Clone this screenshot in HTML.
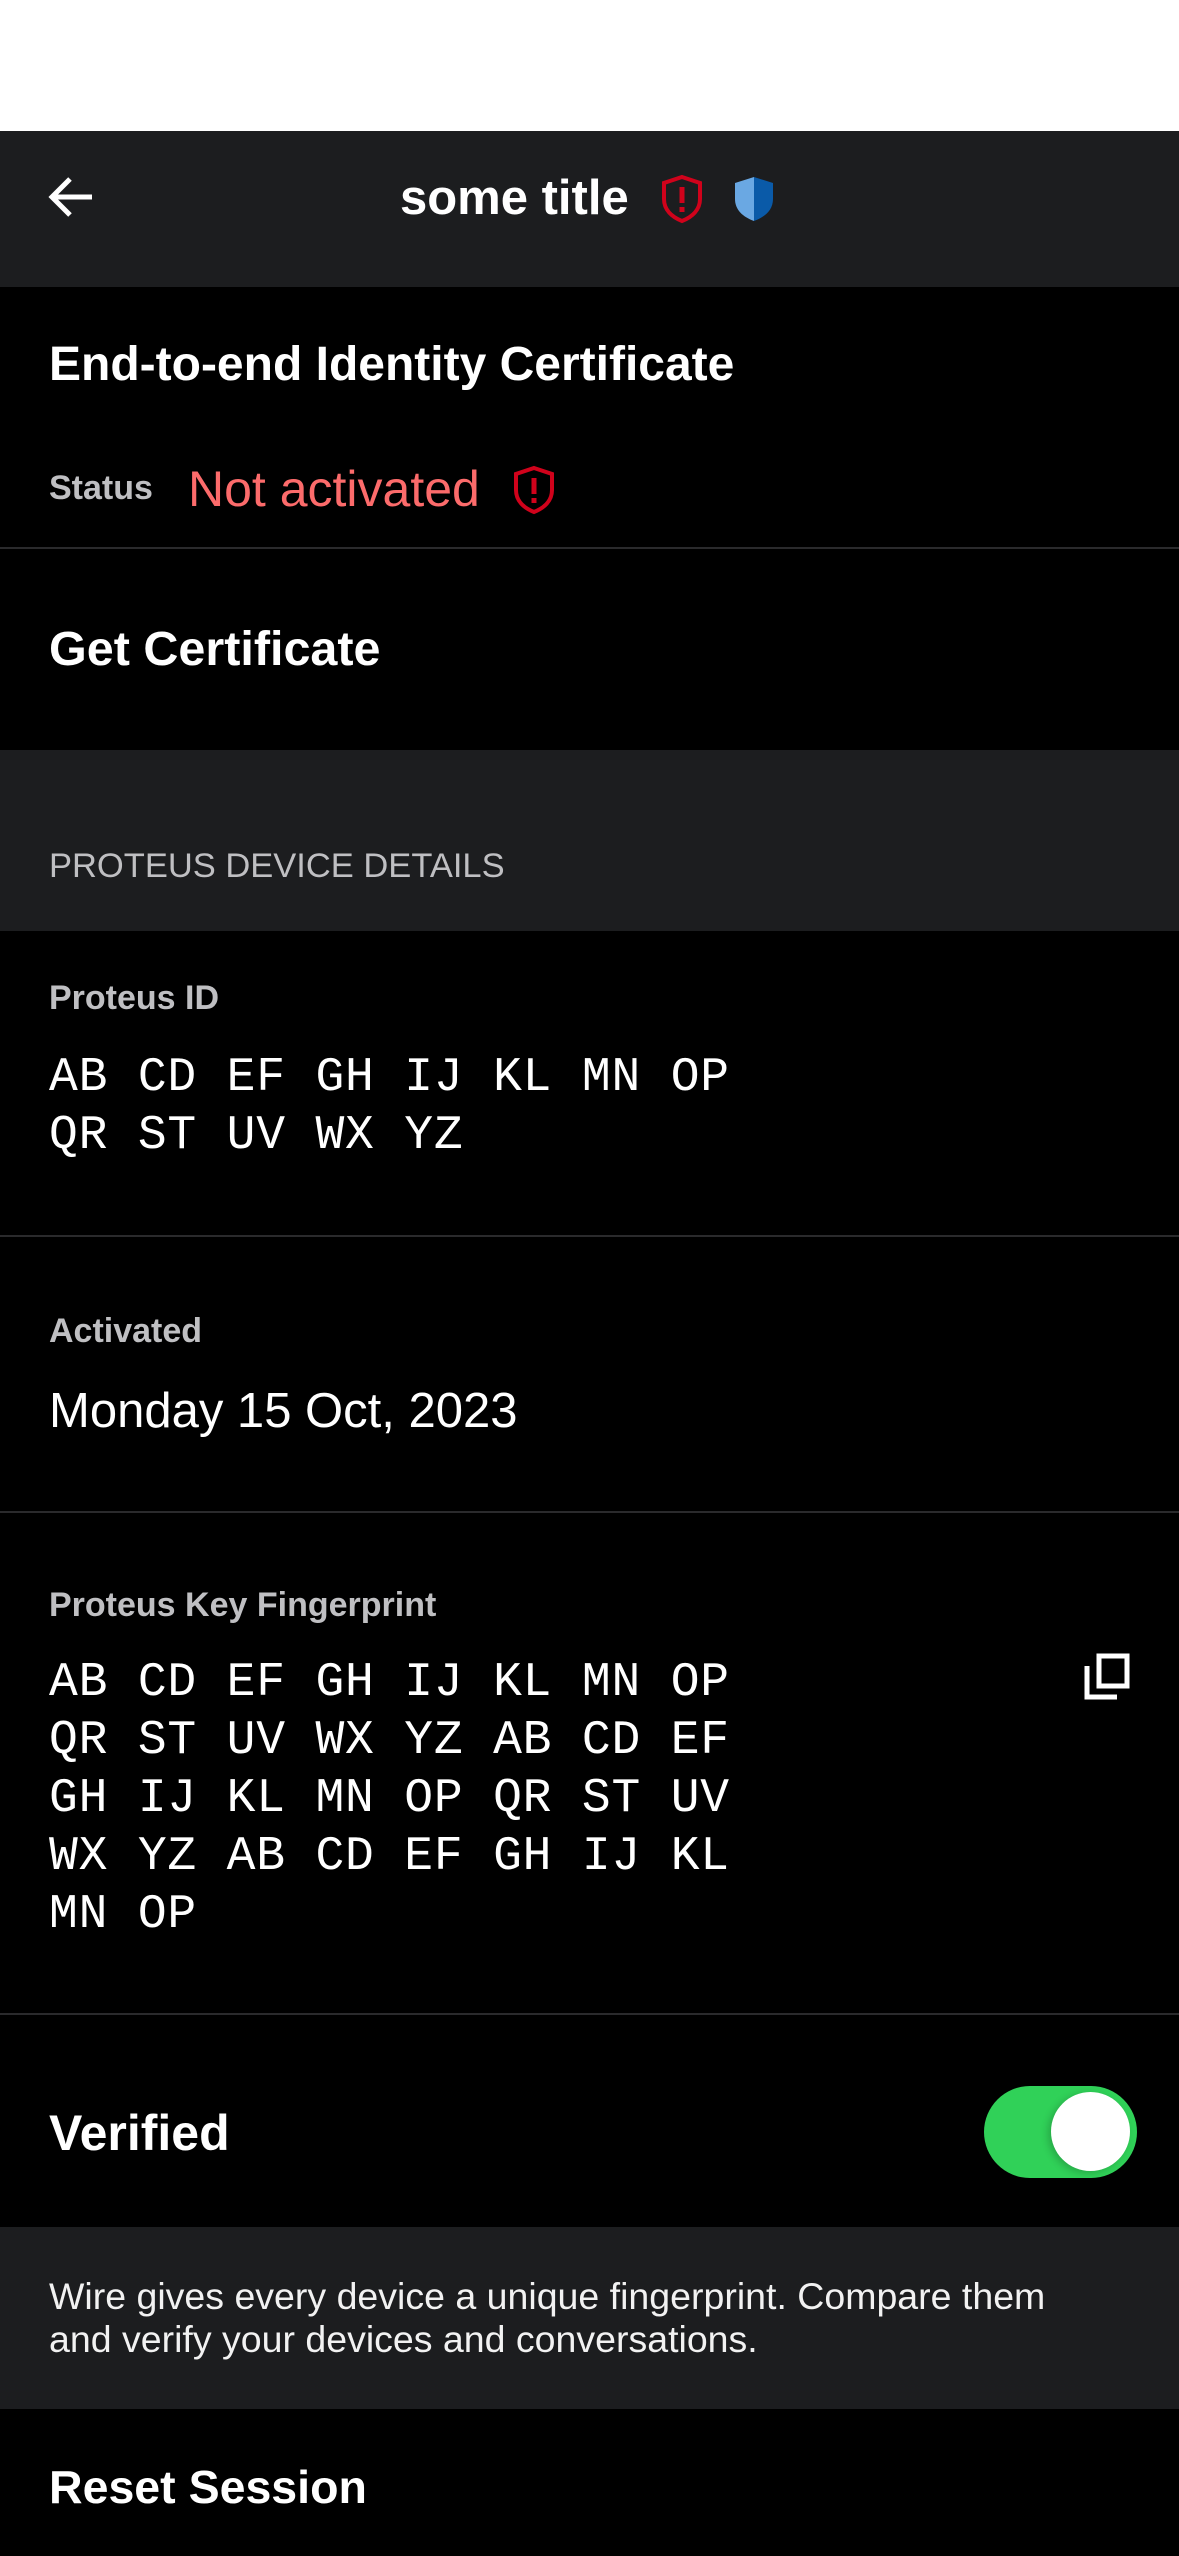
<!DOCTYPE html>
<html><head><meta charset="utf-8"><style>
*{margin:0;padding:0;box-sizing:border-box}
body{width:1179px;height:2556px;background:#000;position:relative;overflow:hidden;font-family:"Liberation Sans",sans-serif;color:#fff}
.a{position:absolute;white-space:nowrap}
.hr{position:absolute;left:0;width:1179px;height:2px;background:#2a2a2c}
.mono{font-family:"Liberation Mono",monospace;font-size:48px;line-height:58px;letter-spacing:0.8px}
</style></head><body>
<div class="a" style="left:0;top:0;width:1179px;height:131px;background:#fff"></div>
<div class="a" style="left:0;top:131px;width:1179px;height:156px;background:#1c1d1f"></div>
<svg class="a" style="left:48px;top:176px" width="46" height="42" viewBox="0 0 46 42"><path d="M44 21H5M22 3L4 21l18 18" stroke="#fff" stroke-width="5" fill="none"/></svg>
<div class="a" style="left:400px;top:169px;font-size:49px;font-weight:bold;line-height:58px">some title</div>
<svg class="a" style="left:660px;top:174px" width="44" height="50" viewBox="0 0 44 50"><path d="M22 3L40 9v16c0 11-8 18-18 22C12 43 4 36 4 25V9z" fill="none" stroke="#d0021b" stroke-width="4"/><rect x="19.5" y="13" width="5" height="16" fill="#d0021b"/><rect x="19.5" y="33" width="5" height="5" fill="#d0021b"/></svg>
<svg class="a" style="left:732px;top:174px" width="44" height="50" viewBox="0 0 44 50"><path d="M22 3L41 9v16c0 11-8 18-19 22z" fill="#0a5aa8"/><path d="M22 3L3 9v16c0 11 8 18 19 22z" fill="#6aa8e3"/></svg>
<div class="a" style="left:49px;top:336px;font-size:48px;font-weight:bold;line-height:58px">End-to-end Identity Certificate</div>
<div class="a" style="left:49px;top:468px;font-size:34px;font-weight:bold;color:#bfbfc2;line-height:40px">Status</div>
<div class="a" style="left:188px;top:459px;font-size:50px;color:#fc6b6b;line-height:60px">Not activated</div>
<svg class="a" style="left:512px;top:465px" width="44" height="50" viewBox="0 0 44 50"><path d="M22 3L40 9v16c0 11-8 18-18 22C12 43 4 36 4 25V9z" fill="none" stroke="#d0021b" stroke-width="4"/><rect x="19.5" y="13" width="5" height="16" fill="#d0021b"/><rect x="19.5" y="33" width="5" height="5" fill="#d0021b"/></svg>
<div class="hr" style="top:547px"></div>
<div class="a" style="left:49px;top:620px;font-size:48.5px;font-weight:bold;line-height:58px">Get Certificate</div>
<div class="a" style="left:0;top:750px;width:1179px;height:181px;background:#1c1d1f"></div>
<div class="a" style="left:49px;top:846px;font-size:34.5px;color:#bfbfc2;line-height:40px">PROTEUS DEVICE DETAILS</div>
<div class="a" style="left:49px;top:978px;font-size:34px;font-weight:bold;color:#bfbfc2;line-height:40px">Proteus ID</div>
<div class="a mono" style="left:49px;top:1049px">AB CD EF GH IJ KL MN OP<br>QR ST UV WX YZ</div>
<div class="hr" style="top:1235px"></div>
<div class="a" style="left:49px;top:1311px;font-size:34px;font-weight:bold;color:#bfbfc2;line-height:40px">Activated</div>
<div class="a" style="left:49px;top:1382px;font-size:49px;line-height:58px">Monday 15 Oct, 2023</div>
<div class="hr" style="top:1511px"></div>
<div class="a" style="left:49px;top:1585px;font-size:34px;font-weight:bold;color:#bfbfc2;line-height:40px">Proteus Key Fingerprint</div>
<div class="a mono" style="left:49px;top:1654px">AB CD EF GH IJ KL MN OP<br>QR ST UV WX YZ AB CD EF<br>GH IJ KL MN OP QR ST UV<br>WX YZ AB CD EF GH IJ KL<br>MN OP</div>
<svg class="a" style="left:1082px;top:1652px" width="50" height="50" viewBox="0 0 50 50"><rect x="17" y="4" width="28" height="30" fill="none" stroke="#fff" stroke-width="5"/><path d="M5 14v31h30" fill="none" stroke="#fff" stroke-width="5"/></svg>
<div class="hr" style="top:2013px"></div>
<div class="a" style="left:49px;top:2103px;font-size:50px;font-weight:bold;line-height:60px">Verified</div>
<div class="a" style="left:984px;top:2086px;width:153px;height:92px;border-radius:46px;background:#30d158"></div>
<div class="a" style="left:1051px;top:2092px;width:79px;height:79px;border-radius:50%;background:#fff;box-shadow:-3px 2px 8px rgba(0,0,0,.2)"></div>
<div class="a" style="left:0;top:2227px;width:1179px;height:182px;background:#1c1d1f"></div>
<div class="a" style="left:49px;top:2275px;font-size:37.5px;line-height:43px;color:#f2f2f2">Wire gives every device a unique fingerprint. Compare them<br>and verify your devices and conversations.</div>
<div class="a" style="left:49px;top:2459px;font-size:46.5px;font-weight:bold;line-height:56px">Reset Session</div>
</body></html>
